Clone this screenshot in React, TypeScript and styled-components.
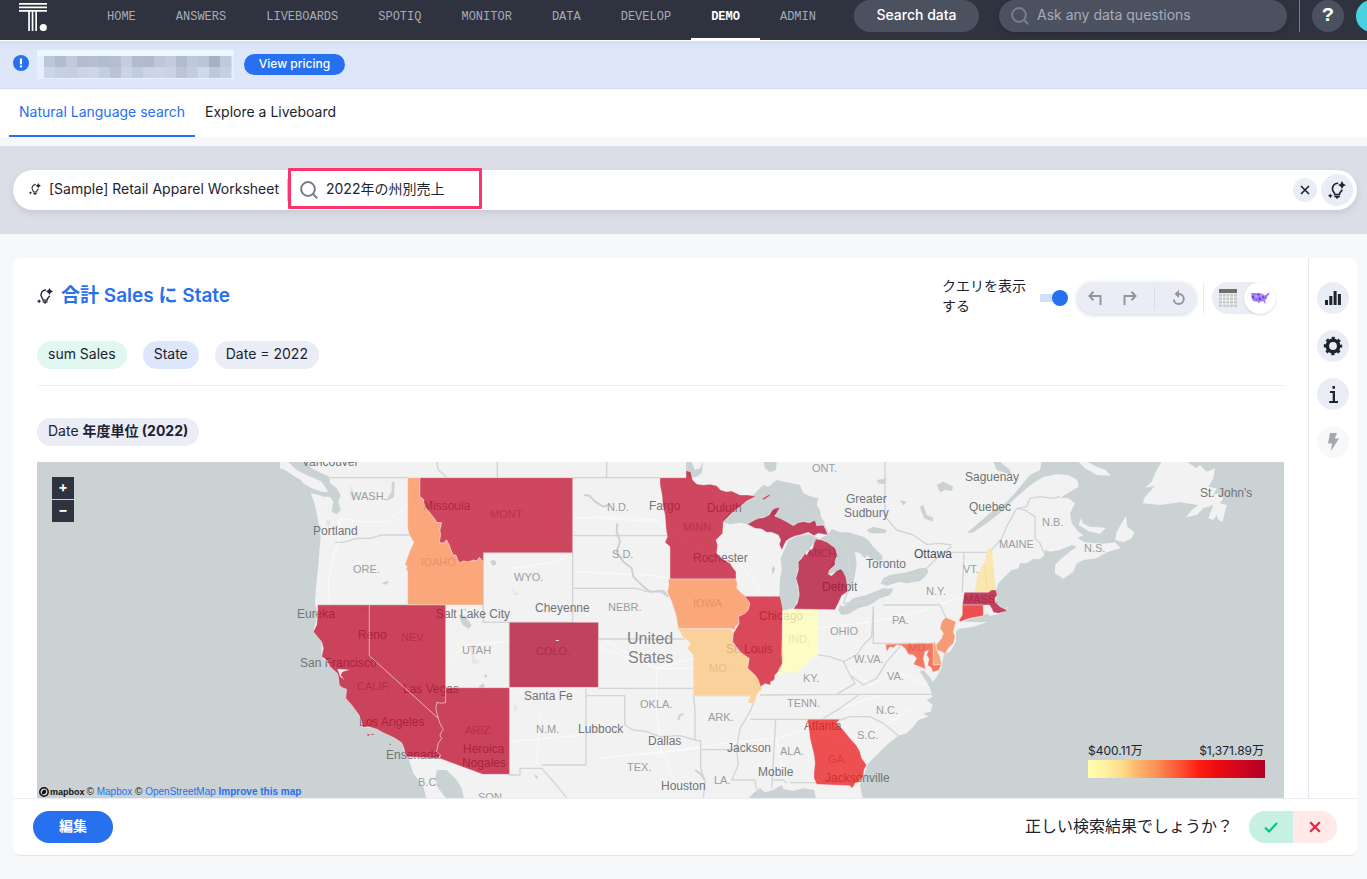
import React, { useState } from "react";
import styled, { createGlobalStyle } from "styled-components";

const sans = `Inter, "Noto Sans CJK JP", sans-serif`;
const ink = "#1d232f";
const blue = "#2770ef";
const line = "#eaedf2";
const soft = "#eaedf5";

const GlobalStyle = createGlobalStyle`
  * { box-sizing: border-box; }
  body { margin: 0; background: #f6f8fa; color: ${ink}; font: 14px/20px ${sans}; }
  button, input { font: inherit; color: inherit; border: 0; padding: 0; background: none; }
  button { cursor: pointer; }
  input:focus { outline: none; }
  svg { display: block; }
  a { color: inherit; text-decoration: none; }
`;

/* ---------- header ---------- */

const Header = styled.header`
  display: flex;
  align-items: flex-start;
  height: 41px;
  overflow: hidden;
  background: #2f333f;
  border-bottom: 1px solid #fff;
`;

const Logo = styled.a`
  flex: none;
  margin: 3px 40px 0 19px;
`;

const Nav = styled.nav`
  display: flex;
  height: 40px;
`;

const NavLink = styled.a<{ $active?: boolean }>`
  padding: 7px 20px 0;
  font: ${(p) => (p.$active ? 700 : 400)} 12px/20px "Liberation Mono", monospace;
  color: ${(p) => (p.$active ? "#fff" : "#a5acb9")};
  border-bottom: 2px solid ${(p) => (p.$active ? "#fff" : "transparent")};
`;

const HeaderTools = styled.div`
  display: flex;
  flex: none;
  margin-left: auto;
  margin-right: -21px;
  height: 32px;
`;

const SearchDataButton = styled.button`
  width: 125px;
  margin-right: 20px;
  padding-bottom: 2px;
  border-radius: 16px;
  background: #4c515f;
  color: #fff;
  font-weight: 500;
`;

const AskBox = styled.label`
  display: flex;
  align-items: center;
  gap: 8px;
  width: 288px;
  padding: 0 12px;
  border-radius: 16px;
  background: #4c515f;
  color: #777e8b;
  box-shadow: 0 2px 4px rgba(20, 24, 32, 0.25);
`;

const AskInput = styled.input`
  flex: 1;
  min-width: 0;
  padding-bottom: 2px;
  color: #fff;
  &::placeholder { color: #a5acb9; opacity: 1; }
`;

const HeaderDivider = styled.span`
  width: 1px;
  margin: 0 12px;
  background: #777e8b;
`;

const HelpButton = styled.button`
  width: 32px;
  height: 32px;
  margin-right: 12px;
  border-radius: 50%;
  background: #4c515f;
  color: #fff;
  font: 700 20px/32px "Liberation Mono", monospace;
`;

const Avatar = styled.button`
  width: 32px;
  height: 32px;
  border-radius: 50%;
  background: #48d1e0;
`;

/* ---------- banner and tabs ---------- */

const Banner = styled.section`
  display: flex;
  align-items: flex-start;
  height: 48px;
  padding: 9px 13px 0;
  background: linear-gradient(#d3e0ef, #dee7fa 9px);
  border-bottom: 1px solid #d5dae8;
`;

const BannerIcon = styled.span`
  display: block;
  margin: 5px 8px 0 0;
`;

const PricingButton = styled.button`
  width: 101px;
  height: 21px;
  margin: 4px 0 0 10px;
  padding-bottom: 2px;
  border-radius: 11px;
  background: ${blue};
  color: #fff;
  font-size: 12px;
  line-height: 16px;
  font-weight: 500;
`;

const Tabs = styled.nav`
  display: flex;
  height: 48px;
  padding-left: 9px;
  background: #fff;
`;

const Tab = styled.a<{ $active?: boolean }>`
  padding: 13px 10px 0;
  color: ${(p) => (p.$active ? blue : ink)};
  border-bottom: 2px solid ${(p) => (p.$active ? blue : "transparent")};
`;

/* ---------- question bar ---------- */

const SearchBand = styled.section`
  margin-top: 9px;
  padding: 24px 10px 24px 13px;
  background: #dbdee7;
`;

const SearchBar = styled.div`
  position: relative;
  display: flex;
  align-items: center;
  height: 40px;
  padding: 0 4px 0 16px;
  border-radius: 20px;
  background: #fff;
  box-shadow: 0 3px 6px rgba(120, 135, 145, 0.22);
`;

const Source = styled.button`
  display: flex;
  align-items: center;
  gap: 8px;
  padding: 0 8px 2px 0;
  white-space: nowrap;
  border-right: 1px solid #c0c6cf;
`;

const Question = styled.label`
  display: flex;
  flex: 1;
  align-items: center;
  gap: 8px;
  padding-left: 12px;
  color: #777e8b;
`;

const QuestionInput = styled.input`
  flex: 1;
  min-width: 0;
  padding-bottom: 2px;
  color: ${ink};
`;

const Highlight = styled.span`
  position: absolute;
  left: 275px;
  top: -2px;
  width: 194px;
  height: 41px;
  border: 3px solid #fb346c;
  border-radius: 1px;
  pointer-events: none;
`;

const RoundButton = styled.button<{ $size: number; $faded?: boolean }>`
  display: flex;
  flex: none;
  align-items: center;
  justify-content: center;
  width: ${(p) => p.$size}px;
  height: ${(p) => p.$size}px;
  border-radius: 50%;
  background: ${(p) => (p.$faded ? "#f6f8fa" : soft)};
`;

const BarActions = styled.div`
  display: flex;
  align-items: center;
  gap: 4px;
`;

/* ---------- answer card ---------- */

const Card = styled.main`
  margin: 24px 10px 24px 13px;
  background: #fff;
  border-radius: 8px;
  border-bottom: 1px solid #e2e5ec;
`;

const CardBody = styled.div`
  display: flex;
  border-bottom: 1px solid ${line};
`;

const Answer = styled.section`
  flex: 1;
  min-width: 0;
  padding: 24px 24px 0;
`;

const Rail = styled.aside`
  display: flex;
  flex-direction: column;
  gap: 16px;
  padding: 24px 8px;
  border-left: 1px solid #e6e9f2;
`;

const AnswerHead = styled.div`
  display: flex;
  height: 59px;
`;

const Title = styled.h1`
  display: flex;
  flex: 1;
  align-items: center;
  gap: 8px;
  height: 28px;
  margin: 0;
  color: ${blue};
  font-size: 19px;
  line-height: 28px;
  font-weight: 600;
  svg { color: ${ink}; }
`;

const ToolRow = styled.div`
  display: flex;
  align-items: center;
  height: 32px;
`;

const SwitchLabel = styled.label`
  display: flex;
  align-items: center;
  width: 126px;
  gap: 14px;
  margin-right: 9px;
`;

const SwitchText = styled.span`
  flex: none;
  width: 84px;
  padding-bottom: 4px;
`;

const Switch = styled.input`
  appearance: none;
  display: flex;
  align-items: center;
  width: 28px;
  height: 16px;
  margin: 0;
  background: linear-gradient(#cfdffc, #cfdffc) 0 4px / 20px 8px no-repeat;
  border-radius: 4px;
  &::before {
    content: "";
    width: 16px;
    height: 16px;
    border-radius: 50%;
    background: #a5acb9;
  }
  &:checked::before { margin-left: 12px; background: ${blue}; }
`;

const HistoryGroup = styled.div`
  display: grid;
  grid-template-columns: 35px 36px 48px;
  width: 119px;
  height: 32px;
  border-radius: 16px;
  background: ${soft};
  box-shadow: 0 1px 4px rgba(100, 115, 130, 0.3);
`;

const HistoryButton = styled.button<{ $split?: boolean }>`
  display: flex;
  align-items: center;
  justify-content: center;
  height: 24px;
  margin: 4px 0 4px ${(p) => (p.$split ? 6 : 0)}px;
  padding-left: ${(p) => (p.$split ? 6 : 0)}px;
  color: #969696;
  border-left: ${(p) => (p.$split ? "1px solid #d7dce6" : "0")};
`;

const ViewGroup = styled.div`
  display: flex;
  margin-left: 7px;
  margin-right: 8px;
  padding-left: 8px;
  border-left: 1px solid ${line};
`;

const ViewPill = styled.div`
  display: flex;
  border-radius: 16px;
  background: ${soft};
`;

const ViewButton = styled.button<{ $on?: boolean }>`
  display: flex;
  align-items: center;
  justify-content: center;
  width: 32px;
  height: 32px;
  border-radius: 50%;
  background: ${(p) => (p.$on ? "#fff" : "transparent")};
  box-shadow: ${(p) => (p.$on ? "0 1px 2px rgba(100,115,130,.25)" : "none")};
`;

const Chips = styled.div`
  display: flex;
  gap: 16px;
  padding-bottom: 16px;
  border-bottom: 1px solid ${line};
`;

const Chip = styled.button<{ $tone?: string }>`
  height: 28px;
  padding: 0 11px 2px;
  border-radius: 14px;
  background: ${(p) => p.$tone || soft};
  white-space: nowrap;
`;

const FilterRow = styled.div`
  padding: 32px 0 16px;
`;

const MapFrame = styled.div`
  position: relative;
  height: 336px;
  overflow: hidden;
  background: #cad2d3;
`;

const MapSvg = styled.svg`
  width: 100%;
  height: 100%;
`;

const ZoomControls = styled.div`
  position: absolute;
  left: 15px;
  top: 15px;
  display: grid;
  gap: 1px;
`;

const ZoomButton = styled.button`
  width: 22px;
  height: 22px;
  padding-bottom: 2px;
  background: #2f333f;
  color: #fff;
  font-size: 14px;
  line-height: 20px;
  font-weight: 700;
`;

const Attribution = styled.div`
  position: absolute;
  left: 2px;
  bottom: 0;
  display: flex;
  align-items: center;
  gap: 2px;
  font-family: "Liberation Sans", sans-serif;
  font-size: 10px;
  line-height: 12px;
  a { color: ${blue}; }
`;

const Wordmark = styled.span`
  display: flex;
  align-items: center;
  gap: 1px;
  color: #111;
  font-size: 9px;
  font-weight: 700;
`;

const Legend = styled.div`
  position: absolute;
  right: 19px;
  bottom: 20px;
  width: 177px;
`;

const LegendText = styled.div`
  display: flex;
  justify-content: space-between;
  padding-right: 1px;
  font-size: 12px;
  line-height: 18px;
`;

const LegendRamp = styled.div`
  height: 18px;
  background: linear-gradient(90deg, #fffdb0, #fff0a0 10%, #fdd985 20%, #fdb56b 28%, #fb935a 38%, #fb6c42 46%, #fb4a2c 54%, #fc1c10 63%, #ea0a10 74%, #cf061f 86%, #b10026);
`;

const Footer = styled.footer`
  display: flex;
  align-items: center;
  height: 56px;
  padding: 0 20px;
`;

const EditButton = styled.button`
  width: 80px;
  height: 32px;
  padding-bottom: 2px;
  border-radius: 16px;
  background: ${blue};
  color: #fff;
  font-weight: 700;
`;

const Prompt = styled.span`
  margin: 0 16px 2px auto;
  font-size: 16px;
`;

const Verdict = styled.div`
  display: flex;
  overflow: hidden;
  border-radius: 16px;
`;

const VerdictButton = styled.button<{ $good?: boolean }>`
  display: flex;
  align-items: center;
  justify-content: center;
  width: 44px;
  height: 32px;
  background: ${(p) => (p.$good ? "#c6f1e2" : "#ffe9e9")};
  color: ${(p) => (p.$good ? "#06bf7f" : "#e22b3d")};
`;

/* ---------- icons ---------- */

const Bulb = ({ size }: { size: number }) => (
  <svg width={size} height={size} viewBox="0 0 18 18" fill="none" stroke="currentColor" aria-hidden>
    <path d="M10.2 2.2A5.4 5.4 0 0 0 5.4 10.6Q6.7 12 6.8 13.6h4.6q0-1.500 1.400-3A5 5 0 0 0 14.200 8.600" strokeWidth="1.600" />
    <path d="M6.300 15h5.600v1.200h-1.300l-.6 1.300H8.200l-.6-1.300H6.300z" fill="currentColor" stroke="none" />
    <path d="M14 0q.7 3.100 4 4-3.300.9-4 4-.7-3.100-4-4 3.300-.9 4-4zM2.300 12.300q.4 2 2.500 2.500-2.100.5-2.500 2.500Q1.900 15.300-.2 14.800q2.100-.5 2.500-2.500z" fill="currentColor" stroke="none" />
  </svg>
);

const Magnifier = () => (
  <svg width="18" height="18" viewBox="0 0 18 18" fill="none" stroke="currentColor" strokeWidth="2" aria-hidden>
    <circle cx="8" cy="8" r="6.900" />
    <path d="M12.800 12.800l4.400 4.400" />
  </svg>
);

const Cross = ({ size, weight }: { size: number; weight: number }) => (
  <svg width={size} height={size} viewBox="0 0 10 10" stroke="currentColor" strokeWidth={weight} aria-hidden>
    <path d="M1 1l8 8M9 1l-8 8" />
  </svg>
);

const LogoMark = () => (
  <svg width="28" height="28" viewBox="0 0 28 28" fill="#fff" aria-hidden>
    <path d="M0 0h28v1.700H0zM0 3.500h28v1.700H0zM0 7h28v1.700H0zM9.200 8h1.700v20H9.200zM12.700 8h1.700v20h-1.700zM16.300 8H18v20h-1.700z" />
    <circle cx="24.300" cy="24.500" r="3.600" />
  </svg>
);

const row1 = ["#bcc7d9", "#b2bccd", "#c0cadc", "#b3bdcf", "#b5bfd0", "#b2bccf", "#b5bed0", "#c3cddd", "#b1bbcd", "#b0bacb", "#bdc7d9", "#c2ccdd", "#b1bbcd", "#bdc8da", "#bbc5d8", "#a7b1c5", "#c0cadd"];
const row2 = ["#ccd6e7", "#c6d0e2", "#c5cfe0", "#cad4e6", "#ccd6e7", "#c4cee0", "#b9c3d5", "#cad4e6", "#c1ccde", "#cad4e6", "#ccd6e7", "#c9d3e4", "#bbc5d7", "#c3cddf", "#cddaea", "#bdc8da", "#c6d0e2"];

const MaskedNotice = () => (
  <svg width="197" height="30" viewBox="0 0 197 30" aria-hidden>
    <rect width="197" height="29" rx="1" fill="#e6effd" />
    <rect width="197" height="6" fill="#edf7ff" />
    {row1.map((c, i) => <rect key={i} x={7 + i * 11} y="6" width="11.500" height="11" fill={c} />)}
    {row2.map((c, i) => <rect key={i} x={7 + i * 11} y="17" width="11.500" height="11" fill={c} />)}
  </svg>
);

const TableIcon = () => (
  <svg width="18" height="18" viewBox="0 0 18 18" aria-hidden>
    <path fill="#6e6e6e" d="M0 0h18v4H0z" />
    <path fill="#c6cbc8" d="M0 5h18v13H0z" />
    <path stroke="#eef0f4" d="M0 8h18M0 11.500h18M0 15h18M3.500 5v13M7 5v13M10.500 5v13M14.500 5v13" />
  </svg>
);

const UsaIcon = () => (
  <svg width="19" height="12" viewBox="0 0 19 12" aria-hidden>
    <path fill="#a07bf2" d="M.5 .8l5 .4 5 .2 2 1 1 1.200 2-1L17.500.5l1 .8-.8 1.700-1.700 1.500-.4 2-1.600 1.800.8 2.900-1 .3-1.300-2.300-3 .3-1.500 1.800-1.500-1.800-2 .1-2.500-.6L1 7 .2 4z" />
    <path fill="#6a2fd0" d="M1 4l2 .5v2L1.500 6zM6.500 1.500h2V3h-2zM7.500 6l2-.3.5 2L8.500 8zM11.500 4l1.500.5V6h-1.500zM14 5.500l1.500-1-.5 2zM5 7.500l1.200.7L5 8.500z" />
    <path fill="#cdb8fa" d="M4.500 3.500h1.800v2H4.500zM10 2.500l1 .6-.4 1.600-1-.6z" />
  </svg>
);

const Gear = () => (
  <svg width="20" height="20" viewBox="0 0 20 20" fill="none" stroke={ink} aria-hidden>
    <circle cx="10" cy="10" r="5.700" strokeWidth="3.600" />
    <circle cx="10" cy="10" r="8" strokeWidth="2.400" strokeDasharray="3.142 3.142" strokeDashoffset="1.571" />
  </svg>
);

/* ---------- map ---------- */

const tones = {
  deep: "#b1052c", wine: "#bc0828", dark: "#c10e2c", red: "#d11026", bright: "#ea1a1a", coral: "#f64e30",
  salmon: "#f87d4e", orange: "#fe8e54", sand: "#fdc57d", cream: "#fce298", pale: "#ffffb4",
};

type Shape = [keyof typeof tones, string];

const westStates: Shape[] = [
  ["orange", "383,68 420,68 420,125 430,132 435,155 455,180 463,190 470,202 485,203 480,225 482,240 478,262 490,264 500,255 508,270 513,285 520,300 528,300 533,315 540,323 550,318 565,320 580,315 590,317 598,307 610,320 610,450 383,450 383,350 378,340 382,335 375,328 385,300 393,280 402,262 388,240 383,220"],
  ["dark", "420,68 878,68 878,293 610,293 610,320 598,307 590,317 580,315 565,320 550,318 540,323 533,315 528,300 520,300 513,285 508,270 500,255 490,264 478,262 482,240 480,225 485,203 470,202 463,190 455,180 435,155 430,132 420,125"],
  ["wine", "113,450 268,450 268,602 475,790 480,805 490,823 480,840 485,850 475,865 470,890 482,900 473,910 380,905 375,895 372,880 365,863 345,850 332,843 310,833 290,822 265,815 248,817 243,795 237,780 215,750 197,730 200,703 185,697 178,690 175,665 172,655 150,635 140,615 125,605 130,580 125,560 112,545 100,530 110,510 113,480"],
  ["wine", "268,450 497,450 497,743 485,745 470,743 468,763 475,790 268,602"],
  ["wine", "497,698 688,698 688,958 608,958 478,910 482,900 470,890 475,865 485,850 480,840 490,823 480,805 475,790 468,763 470,743 485,745 497,743"],
];

const centralStates: Shape[] = [
  ["deep", "28,502 295,502 295,697 28,697"],
  ["dark", "480,68 558,68 558,47 572,50 578,75 590,87 610,90 630,88 650,92 662,105 680,110 695,108 720,120 745,120 768,124 740,138 720,155 695,175 670,200 668,235 648,255 653,270 650,295 665,310 690,325 700,340 708,350 708,372 510,372 510,275 495,262 502,245 498,220 495,180 488,150 486,120 480,90"],
  ["orange", "505,372 708,372 712,385 710,400 725,415 740,425 750,445 745,465 735,475 715,485 718,505 705,515 705,525 695,521 535,521 528,480 515,440 502,410 507,390"],
  ["sand", "535,521 695,521 700,535 698,560 720,590 740,605 748,610 743,640 765,660 775,675 785,695 785,705 775,712 768,725 760,745 742,743 752,722 580,722 580,600 562,580 572,565 548,545"],
  ["red", "735,424 840,424 848,460 848,580 850,600 845,640 830,655 825,660 823,675 812,680 812,690 795,686 782,695 775,675 765,660 743,640 748,610 740,605 720,590 698,560 700,535 718,505 715,485 735,475 745,465 750,445"],
];

const eastStates: Shape[] = [
  ["pale", "128,468 150,462 235,462 235,598 222,605 210,610 200,630 190,640 180,640 172,655 150,652 130,655 112,658 118,640 128,625 125,600"],
  ["deep", "22,208 40,197 55,190 70,188 88,180 97,165 105,160 120,157 110,175 103,183 120,190 140,200 160,212 175,203 190,200 210,203 225,196 230,212 250,210 258,225 263,240 235,235 222,242 205,232 180,240 165,243 150,250 138,258 130,275 125,285 118,268 122,255 115,240 95,232 80,232 65,222 45,220"],
  ["dark", "65,132 88,118 90,122 72,134"],
  ["deep", "228,252 245,255 262,262 275,272 285,278 292,300 285,318 285,330 268,345 265,358 275,362 290,347 302,342 310,350 317,365 322,390 322,410 305,422 295,445 285,464 160,462 172,445 178,420 175,395 168,370 175,345 175,320 185,310 195,295 200,300 205,290 218,280 222,265"],
  ["cream", "743,280 750,278 756,282 762,340 768,405 745,412 702,410 708,385 712,360 720,345 735,315"],
  ["deep", "673,412 745,412 755,405 768,405 772,420 765,430 765,440 780,455 800,465 802,455 800,468 775,475 760,472 755,460 748,450 667,450"],
  ["bright", "667,450 730,450 730,482 690,490 660,500 657,495 667,480"],
  ["salmon", "617,487 648,500 640,530 645,545 640,565 625,580 615,597 605,590 590,585 588,570 605,550 610,535 600,520 605,500"],
  ["coral", "437,568 580,565 580,630 604,628 597,645 578,652 575,640 563,630 567,612 560,600 565,585 555,590 550,610 557,643 540,635 520,628 530,610 520,600 505,598 495,580 485,572 470,570 460,578 450,575 440,590"],
  ["orange", "580,562 586,562 590,585 600,605 605,628 580,630"],
  ["bright", "203,793 300,793 290,803 310,825 330,850 350,872 360,890 365,910 380,930 372,945 370,965 355,982 345,985 342,992 335,1000 330,992 230,988 222,970 222,950 225,925 222,900 210,850"],
];

const westLand = "78,20 900,20 900,1032 552,1032 545,1000 530,975 500,945 470,945 466,970 475,1000 500,1032 440,1032 430,995 400,955 385,910 375,895 365,863 330,840 290,820 248,817 237,780 215,750 197,730 200,703 178,690 172,655 150,635 125,605 125,560 100,530 113,480 105,445 108,400 115,330 118,290 122,250 115,200 105,150 92,115 110,118 130,125 150,125 160,140 155,170 170,178 182,165 175,140 182,120 170,100 150,85 148,65 125,55 95,40";
const vancouverIsland = "0,20 25,22 50,45 80,60 100,68 125,80 135,95 145,112 125,110 95,100 70,85 62,75 40,62 15,45 0,40";
const eastLand = "-600,20 905,20 900,45 870,60 845,90 820,120 790,150 760,165 720,200 680,235 700,232 740,205 785,170 820,135 860,100 885,80 910,66 950,58 985,60 1012,75 1016,95 990,110 962,128 985,130 1005,145 990,175 995,205 1015,230 1030,240 1012,250 1035,262 1090,266 1125,262 1142,280 1100,292 1070,310 1030,315 1010,325 1000,350 970,371 945,355 945,330 965,310 990,290 1010,275 995,270 960,285 930,290 915,285 915,300 900,312 880,312 860,325 840,325 835,340 815,345 790,370 775,385 768,405 772,420 765,440 780,455 800,465 775,478 750,482 740,475 730,482 690,492 670,500 715,502 745,500 700,515 655,522 648,530 648,560 630,590 612,597 604,640 590,665 578,680 572,670 550,645 540,650 560,680 570,700 578,725 560,735 578,750 572,770 550,775 565,785 535,795 520,815 500,835 475,842 440,870 410,900 385,925 370,965 360,990 368,1030 -600,1030";

const waters = [
  "-55,200 -30,172 0,150 30,130 60,100 70,90 85,95 110,75 140,82 180,90 190,115 215,125 235,130 230,150 240,165 243,185 255,205 235,212 200,200 160,212 120,190 88,182 55,190 22,208 0,203 -30,208",
  "235,248 205,238 165,245 145,258 135,280 122,310 125,345 120,370 118,430 128,465 150,465 165,455 178,420 168,370 178,315 200,290",
  "95,340 103,332 105,345 98,360",
  "262,240 275,222 300,232 325,232 370,245 385,255 400,275 425,300 428,312 418,318 390,310 382,300 375,310 360,295 345,290 350,330 345,360 338,390 325,415 322,390 310,350 290,347 265,360 265,340 292,300 262,262 235,252",
  "300,450 310,455 340,430 380,420 430,400 460,403 450,420 420,430 390,450 355,460 325,478 305,480 295,465",
  "422,386 430,370 450,360 500,352 540,340 560,338 565,350 555,365 540,378 500,385 480,380 440,392",
  "40,1015 60,1000 75,1012 100,1005 125,990 130,1002 160,1008 190,1000 222,1005 228,1030 25,1030",
  "-161,20 -145,22 -135,45 -120,40 -110,20 -115,55 -130,65 -150,70 -162,50",
  "70,20 110,20 108,45 90,52 75,40", "590,90 610,80 640,95 635,108 615,105 600,112",
  "480,135 500,140 490,152", "540,155 550,150 560,180 580,188 578,200 552,190", "410,75 440,70 435,88 415,85",
  "380,225 400,215 440,225 435,235 390,235", "760,20 780,20 810,45 815,60 800,55 770,45",
];

const atlanticLand = [
  "235,20 260,20 290,35 318,45 332,62 290,60 255,40",
  "345,255 350,230 365,205 378,183 382,215 403,232 395,250 370,262",
  "235,210 245,187 248,205 270,215 318,218 300,237 265,228",
  "428,145 435,125 465,92 435,98 455,80 470,45 485,20 560,20 590,40 600,30 620,50 645,40 640,70 625,95 650,100 640,120 655,115 670,130 660,145 680,150 668,200 655,195 650,180 640,195 625,190 640,150 610,160 590,180 558,187 575,165 595,150 540,142 480,150",
];

const riversCentral = "M252,120 268,122 285,140 310,155 325,150M352,205 350,230 360,260 350,290 370,320 395,340 400,365 430,395 450,410 490,408 505,425M535,795 540,780 550,778M585,945 600,955 615,975M105,960 112,970";
const bordersWest = "M150,68H383M652,20V68M112,26 130,20M165,262 190,262 230,250 270,250 305,240H388M113,450H383M610,450V502H688V698M340,80 338,120 320,135M470,20 475,45 500,66";
const bordersCentral = "M218,68H480M320,20V68M-50,293H218V502H-50ZM218,242H502M218,400H410L440,410H480L505,425M295,502V552H555M295,700H580M258,700V722H374V810L400,825 440,830 480,845 540,842 585,855 602,858V940L615,980 610,1028M580,722 585,760V855M258,722V930H125M28,697V960H60V940H125L165,985 200,1028M602,884H710M768,725 750,770 720,820 710,880 715,930 695,975H765L770,1005M752,722H580";
const bordersEast = "M435,20V185L470,225 520,240 560,268 600,265 635,270M60,720 350,718H575M30,793H300M107,795 95,1000M100,975H130L140,985M150,983H230M235,600 270,605 310,620 350,600 370,570 395,545 400,455V565H580M430,450H600L617,487M310,620 330,660 345,685 290,718M330,660 370,690 410,670 440,620 480,575M635,292H745M672,292 667,412M300,795 330,785H390L430,805 475,842M250,790 300,760 355,720M100,108 190,160 250,205 265,235 320,280 330,350 320,420 310,445 370,440 455,400M425,385 450,368 540,360 600,300 635,275M750,290 785,250 800,215 830,160 855,165 885,185V250L900,265 915,300M830,160 860,155 870,130 900,125 940,130 960,125M740,405 735,330";
const roads = "M-400,560 -250,640 -100,600 0,590 128,560 235,520 400,500 540,470 650,430M-300,900 -150,880 0,860 110,850 210,820 300,760 420,720M0,330 60,400 120,470M110,850 130,960M300,620 390,690 470,650 560,690M240,830 330,870 400,830 520,760M-420,190 -250,200 -100,300";

const labels: [string, number, number, boolean?][] = [
  ["Vancouver", 302, 466], ["Portland", 313, 535], ["Eureka", 297, 618], ["San Francisco", 300, 667], ["Reno", 358, 639],
  ["Los Angeles", 359, 726], ["Las Vegas", 403, 693], ["Ensenada", 386, 759], ["Missoula", 423, 510], ["Salt Lake City", 436, 618],
  ["Cheyenne", 535, 612], ["Santa Fe", 524, 700], ["Lubbock", 578, 733], ["Dallas", 648, 745], ["Houston", 661, 790],
  ["Fargo", 649, 510], ["Duluth", 707, 512], ["Rochester", 693, 562], ["Chicago", 759, 620], ["St. Louis", 726, 653],
  ["Jackson", 727, 752], ["Mobile", 758, 776], ["Atlanta", 804, 730], ["Jacksonville", 825, 782], ["Detroit", 822, 591],
  ["Toronto", 866, 568], ["Greater", 846, 503], ["Sudbury", 844, 517], ["Saguenay", 965, 481], ["Quebec", 969, 511],
  ["St. John's", 1200, 497], ["Heroica", 463, 753], ["Nogales", 462, 767],
  ["WASH.", 351, 500, true], ["ORE.", 353, 573, true], ["IDAHO", 421, 566, true], ["MONT.", 490, 518, true], ["WYO.", 514, 581, true],
  ["NEV.", 401, 641, true], ["UTAH", 462, 654, true], ["CALIF.", 357, 690, true], ["ARIZ.", 465, 734, true], ["COLO.", 536, 655, true],
  ["N.D.", 607, 511, true], ["S.D.", 612, 558, true], ["NEBR.", 608, 611, true], ["MINN.", 683, 531, true], ["IOWA", 693, 607, true],
  ["MO.", 709, 672, true], ["OKLA.", 640, 708, true], ["ARK.", 708, 721, true], ["N.M.", 536, 733, true], ["TEX.", 627, 771, true],
  ["LA.", 714, 784, true], ["B.C.", 418, 786, true], ["SON.", 478, 801, true], ["ONT.", 812, 472, true], ["MICH.", 808, 557, true],
  ["IND.", 788, 643, true], ["OHIO", 830, 635, true], ["KY.", 803, 682, true], ["TENN.", 787, 707, true], ["ALA.", 780, 755, true],
  ["GA.", 828, 763, true], ["S.C.", 857, 739, true], ["N.C.", 876, 714, true], ["VA.", 887, 680, true], ["W.VA.", 854, 663, true],
  ["PA.", 892, 624, true], ["N.Y.", 926, 595, true], ["VT.", 963, 573, true], ["MAINE", 999, 548, true], ["MASS.", 964, 603, true],
  ["MD.", 908, 651, true], ["N.B.", 1042, 526, true], ["N.S.", 1084, 552, true],
];

const MapText = styled.text<{ $state?: boolean; $strong?: boolean }>`
  font-family: "Liberation Sans", sans-serif;
  font-size: ${(p) => (p.$state ? 11 : 12)}px;
  fill: ${(p) => (p.$strong ? "#4a4d50" : p.$state ? "#9a9ea0" : "#717476")};
`;

const CountryText = styled.text`
  font-family: "Liberation Sans", sans-serif;
  font-size: 16px;
  fill: #808486;
`;

const west = "translate(280 455) scale(.33333)";
const central = "translate(500 455) scale(.33333)";
const east = "translate(740 455) scale(.33333)";
const atlantic = "translate(1000 455) scale(.33333)";

const States = ({ at, shapes }: { at: string; shapes: Shape[] }) => (
  <g transform={at} fillOpacity=".75" stroke="#f2f2f2" strokeOpacity=".6" strokeWidth="2" strokeLinejoin="round">
    {shapes.map(([tone, points]) => <polygon key={points} points={points} fill={tones[tone]} />)}
  </g>
);

const SalesMap = () => (
  <MapSvg viewBox="37 462 1247 336" preserveAspectRatio="xMidYMid slice" role="img" aria-label="Sales by state">
    <g fill="#f2f2f2">
      <g transform={west}>
        <polygon points={westLand} />
        <polygon points={vancouverIsland} />
      </g>
      <g transform={east}><polygon points={eastLand} /></g>
      <g transform={atlantic}>{atlanticLand.map((p) => <polygon key={p} points={p} />)}</g>
    </g>
    <g fill="#cad2d3">
      <g transform={east}>{waters.map((p) => <polygon key={p} points={p} />)}</g>
      <g transform={west}>
        <path d="M305,385l18,-8 3,6 -10,6zM335,82l9,0 -2,45 -25,12 12,-20 6,-10zM535,478l20,5 20,28 -10,10 -18,-12zM630,318l14,-4 6,14 -12,4zM550,462l8,-2 2,10zM595,695l14,-10 6,10 -12,8zM612,665l6,-10 4,12z" />
      </g>
    </g>
    <g transform={west} fill="#e4e7e4">
      <path d="M140,190l12,10 -6,20 -8,-12zM212,90l14,30 -6,20 -12,-24zM400,110l14,12 -10,14zM690,390l18,22 14,4 -16,6zM660,470l20,14 -6,20zM570,560l14,50 16,12 -22,8zM240,470l12,-24 6,22zM700,740l12,20 -8,12z" />
    </g>
    <g fill="none" stroke="#fbfbfb" strokeWidth="3" strokeLinejoin="round">
      <path transform={east} d={roads} />
      <path transform={west} d="M150,450 145,380 160,300 175,262 180,190M180,190 240,200 320,200 383,150M497,480 620,470M500,620 560,570 688,560M700,340 830,320 878,290" />
      <path transform={central} d="M218,190 330,185 480,195M218,350 440,360 505,370M300,575 470,640 580,640M470,640 470,770 485,890M300,910 485,890 600,880M485,890 530,990M30,860 250,840M110,930 120,780M485,890l-20,-14M485,890l22,12M485,890l-14,20" />
    </g>
    <g fill="none" stroke="#d0d5d6" strokeWidth="4" strokeLinejoin="round">
      <path transform={west} d={bordersWest} />
      <path transform={central} d={bordersCentral} />
      <path transform={east} d={bordersEast} />
      <path transform={central} d={riversCentral} stroke="#cad2d3" strokeWidth="6" />
    </g>
    {labels.map(([name, x, y, state]) => <MapText key={name} x={x} y={y} $state={state}>{name}</MapText>)}
    <MapText x="914" y="558" $strong>Ottawa</MapText>
    <CountryText x="627" y="644">United</CountryText>
    <CountryText x="628" y="663">States</CountryText>
    <States at={west} shapes={westStates} />
    <States at={central} shapes={centralStates} />
    <States at={east} shapes={eastStates} />
    <path transform={west} d="M172,642L186,643 209,644 188,650 182,660 194,676 180,664 176,652z" fill="#f2f2f2" />
    <path transform={west} d="M262,837h6v5h-6zM274,837h7v3h-7zM328,866h5v3h-5z" fill="#d04a5e" />
    <path transform={central} d="M167,555h10v3h-10z" fill="#f2dfe2" />
  </MapSvg>
);

/* ---------- page ---------- */

const navItems = ["HOME", "ANSWERS", "LIVEBOARDS", "SPOTIQ", "MONITOR", "DATA", "DEVELOP", "DEMO", "ADMIN"];

export default function App() {
  const [question, setQuestion] = useState("2022年の州別売上");
  const [showQuery, setShowQuery] = useState(true);

  return (
    <>
      <GlobalStyle />
      <Header>
        <Logo href="#" aria-label="ThoughtSpot"><LogoMark /></Logo>
        <Nav>
          {navItems.map((n) => <NavLink key={n} href="#" $active={n === "DEMO"}>{n}</NavLink>)}
        </Nav>
        <HeaderTools>
          <SearchDataButton>Search data</SearchDataButton>
          <AskBox>
            <Magnifier />
            <AskInput placeholder="Ask any data questions" aria-label="Ask any data questions" />
          </AskBox>
          <HeaderDivider />
          <HelpButton>?</HelpButton>
          <Avatar aria-label="Profile" />
        </HeaderTools>
      </Header>

      <Banner>
        <BannerIcon>
          <svg width="16" height="16" viewBox="0 0 16 16" aria-hidden>
            <circle cx="8" cy="8" r="8" fill={blue} />
            <path d="M6.900 3.500h2.200v5.700H6.900zM6.900 10.500h2.200v2H6.900z" fill="#fff" />
          </svg>
        </BannerIcon>
        <MaskedNotice />
        <PricingButton>View pricing</PricingButton>
      </Banner>

      <Tabs>
        <Tab href="#" $active>Natural Language search</Tab>
        <Tab href="#">Explore a Liveboard</Tab>
      </Tabs>

      <SearchBand>
        <SearchBar>
          <Source><Bulb size={12} />[Sample] Retail Apparel Worksheet</Source>
          <Question>
            <Magnifier />
            <QuestionInput value={question} onChange={(e) => setQuestion(e.target.value)} aria-label="Question" />
          </Question>
          <BarActions>
            <RoundButton $size={24} aria-label="Clear"><Cross size={10} weight={1.6} /></RoundButton>
            <RoundButton $size={32} aria-label="Search"><Bulb size={18} /></RoundButton>
          </BarActions>
          <Highlight />
        </SearchBar>
      </SearchBand>

      <Card>
        <CardBody>
          <Answer>
            <AnswerHead>
              <Title><Bulb size={16} />合計 Sales に State</Title>
              <ToolRow>
                <SwitchLabel>
                  <SwitchText>クエリを表示する</SwitchText>
                  <Switch type="checkbox" checked={showQuery} onChange={(e) => setShowQuery(e.target.checked)} />
                </SwitchLabel>
                <HistoryGroup>
                  <HistoryButton aria-label="Undo">
                    <svg width="14" height="14" viewBox="0 0 14 14" fill="none" stroke="currentColor" strokeWidth="2"><path d="M5.500 .8L1.500 5l4 4.200M1.500 5H12.500v9" /></svg>
                  </HistoryButton>
                  <HistoryButton aria-label="Redo">
                    <svg width="14" height="14" viewBox="0 0 14 14" fill="none" stroke="currentColor" strokeWidth="2"><path d="M8.500 .8l4 4.200-4 4.200M12.500 5H1.500v9" /></svg>
                  </HistoryButton>
                  <HistoryButton $split aria-label="Reset">
                    <svg width="14" height="16" viewBox="0 0 14 16" fill="none" stroke="currentColor" strokeWidth="2"><path d="M4 4h3.500a5 5 0 1 1-5.700 5.500" /><path d="M7 0v8L2.500 4z" fill="currentColor" stroke="none" /></svg>
                  </HistoryButton>
                </HistoryGroup>
                <ViewGroup>
                  <ViewPill>
                    <ViewButton aria-label="Table"><TableIcon /></ViewButton>
                    <ViewButton $on aria-label="Map"><UsaIcon /></ViewButton>
                  </ViewPill>
                </ViewGroup>
              </ToolRow>
            </AnswerHead>
            <Chips>
              <Chip $tone="#e0f8f0">sum Sales</Chip>
              <Chip $tone="#dde7fb">State</Chip>
              <Chip>Date = 2022</Chip>
            </Chips>
            <FilterRow>
              <Chip>Date <b>年度単位 (2022)</b></Chip>
            </FilterRow>
            <MapFrame>
              <SalesMap />
              <ZoomControls>
                <ZoomButton aria-label="Zoom in">+</ZoomButton>
                <ZoomButton aria-label="Zoom out">−</ZoomButton>
              </ZoomControls>
              <Attribution>
                <Wordmark>
                  <svg width="10" height="10" viewBox="0 0 10 10" aria-hidden>
                    <circle cx="5" cy="5" r="4.200" fill="none" stroke="#111" strokeWidth="1.500" />
                    <path d="M3 7.500C2.500 4 4 2.500 6.500 2.800 8 5 6.500 7.500 3 7.500z" fill="#111" />
                  </svg>
                  mapbox
                </Wordmark>
                <span>© <a href="#">Mapbox</a> © <a href="#">OpenStreetMap</a> <a href="#"><b>Improve this map</b></a></span>
              </Attribution>
              <Legend>
                <LegendText><span>$400.11万</span><span>$1,371.89万</span></LegendText>
                <LegendRamp />
              </Legend>
            </MapFrame>
          </Answer>
          <Rail>
            <RoundButton $size={32} aria-label="Chart">
              <svg width="16" height="14" viewBox="0 0 16 14" fill={ink}><path d="M0 9h3v5H0zM4.300 5h3v9h-3zM8.600 0h3v14h-3zM12.900 3h3v11h-3z" /></svg>
            </RoundButton>
            <RoundButton $size={32} aria-label="Settings"><Gear /></RoundButton>
            <RoundButton $size={32} aria-label="Info">
              <svg width="9" height="17" viewBox="0 0 9 17" fill={ink}><path d="M3.500 0h2.500v2.700H3.500zM1 5h5v10h3v2H.2v-2h3.500V7H1z" /></svg>
            </RoundButton>
            <RoundButton $size={32} $faded aria-label="Insights">
              <svg width="11" height="18" viewBox="0 0 11 18" fill="#a5a7aa"><path d="M2 0h7L6.800 5.500H11L3 18l1-7.500H0z" /></svg>
            </RoundButton>
          </Rail>
        </CardBody>
        <Footer>
          <EditButton>編集</EditButton>
          <Prompt>正しい検索結果でしょうか？</Prompt>
          <Verdict>
            <VerdictButton $good aria-label="Yes">
              <svg width="14" height="11" viewBox="0 0 14 11" fill="none" stroke="currentColor" strokeWidth="2"><path d="M1 5.500l4 4L13 1" /></svg>
            </VerdictButton>
            <VerdictButton aria-label="No"><Cross size={12} weight={1.9} /></VerdictButton>
          </Verdict>
        </Footer>
      </Card>
    </>
  );
}
